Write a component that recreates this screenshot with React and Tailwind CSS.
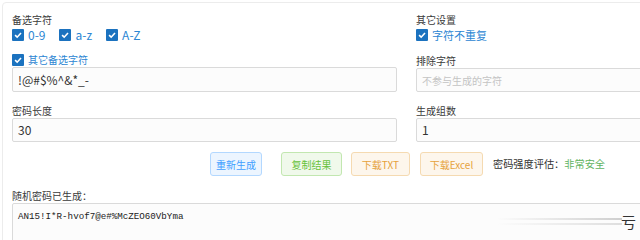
import React from 'react';

const font = { fontFamily: '"Noto Sans CJK SC", "Noto Sans", sans-serif' };

const Check = ({ label, size = 'text-[12px]' }) => (
  <label className="flex items-center gap-[4px] h-[14px]">
    <span className="w-[12px] h-[12px] bg-[#1b72bf] rounded-[1px] flex items-center justify-center">
      <svg viewBox="0 0 12 12" className="w-[10px] h-[10px]">
        <path d="M2.5 6.2 L5 8.6 L9.6 3.6" fill="none" stroke="#fff" strokeWidth="1.9" />
      </svg>
    </span>
    <span className={`${size} text-[#2c86d3] leading-[14px]`}>{label}</span>
  </label>
);

const Label = ({ children, className = '' }) => (
  <div className={`text-[10px] leading-[14px] h-[14px] text-[#3a3a3a] ${className}`}>{children}</div>
);

const Input = ({ value, placeholder, className = 'h-[24px]' }) => (
  <div className={`${className} border border-[#dadada] bg-[#fcfcfc] rounded-[2px] px-[5px] flex items-center`}>
    {value ? (
      <span className="text-[12px] text-[#333]">{value}</span>
    ) : (
      <span className="text-[10px] text-[#c4c4c4]">{placeholder}</span>
    )}
  </div>
);

export default function App() {
  return (
    <div className="w-[640px] h-[240px] overflow-hidden bg-white relative" style={font}>
      <div className="ml-[2px] mt-[2px] w-[811px] border border-[#ececec] rounded-[4px] px-[9px] pt-[10px] bg-white">
        <div className="grid grid-cols-[385px_385px] gap-x-[19px]">
          {/* left column */}
          <div>
            <Label>备选字符</Label>
            <div className="flex gap-[14px] mt-[1px]">
              <Check label="0-9" />
              <Check label="a-z" />
              <Check label="A-Z" />
            </div>
            <div className="mt-[11px]">
              <Check label="其它备选字符" size="text-[10px]" />
            </div>
            <Input value="!@#$%^&*_-" className="h-[25px]" />
          </div>
          {/* right column */}
          <div>
            <Label>其它设置</Label>
            <div className="flex mt-[1px]">
              <Check label="字符不重复" size="text-[11px]" />
            </div>
            <Label className="mt-[12px]">排除字符</Label>
            <Input placeholder="不参与生成的字符" />
          </div>
          <div>
            <Label className="mt-[12px]">密码长度</Label>
            <Input value="30" />
          </div>
          <div>
            <Label className="mt-[12px]">生成组数</Label>
            <Input value="1" />
          </div>
        </div>

        {/* buttons */}
        <div className="mt-[10px] flex items-center justify-center h-[24px]">
          <div className="flex items-center">
            <button className="w-[52px] h-[24px] rounded-[3px] border border-[#b3d8ff] bg-[#ecf5ff] text-[#409eff] text-[10px]">重新生成</button>
            <button className="ml-[19px] w-[61px] h-[24px] rounded-[3px] border border-[#c2e7b0] bg-[#f0f9eb] text-[#67c23a] text-[10px]">复制结果</button>
            <button className="ml-[9px] w-[59px] h-[24px] rounded-[3px] border border-[#f5dab1] bg-[#fdf6ec] text-[#e6a23c] text-[10px]">下载TXT</button>
            <button className="ml-[10px] w-[63px] h-[24px] rounded-[3px] border border-[#f5dab1] bg-[#fdf6ec] text-[#e6a23c] text-[10px]">下载Excel</button>
            <span className="ml-[10px] text-[10.2px] text-[#333]">
              密码强度评估：<span className="text-[#5fb35f]">非常安全</span>
            </span>
          </div>
        </div>

        {/* result */}
        <Label className="mt-[13px]">随机密码已生成：</Label>
        <div className="h-[60px] border border-[#dadada] bg-[#fcfcfc] rounded-[2px] px-[5px] pt-[6px]">
          <div className="text-[9.2px] leading-[14px] text-[#222]" style={{ fontFamily: '"Liberation Mono", monospace' }}>
            AN15!I*R-hvof7@e#%McZEO60VbYma
          </div>
        </div>
      </div>

      {/* trailing overlay at the right edge */}
      <div className="absolute left-[497px] top-[218px] w-[125px] h-[2px] bg-gradient-to-r from-transparent to-[#cfcfcf]" />
      <div className="absolute left-[497px] top-[223px] w-[125px] h-[2px] bg-gradient-to-r from-transparent to-[#dedede]" />
      <span className="absolute left-[621px] top-[212px] text-[15px] leading-[20px] text-[#333]">亏</span>
    </div>
  );
}
